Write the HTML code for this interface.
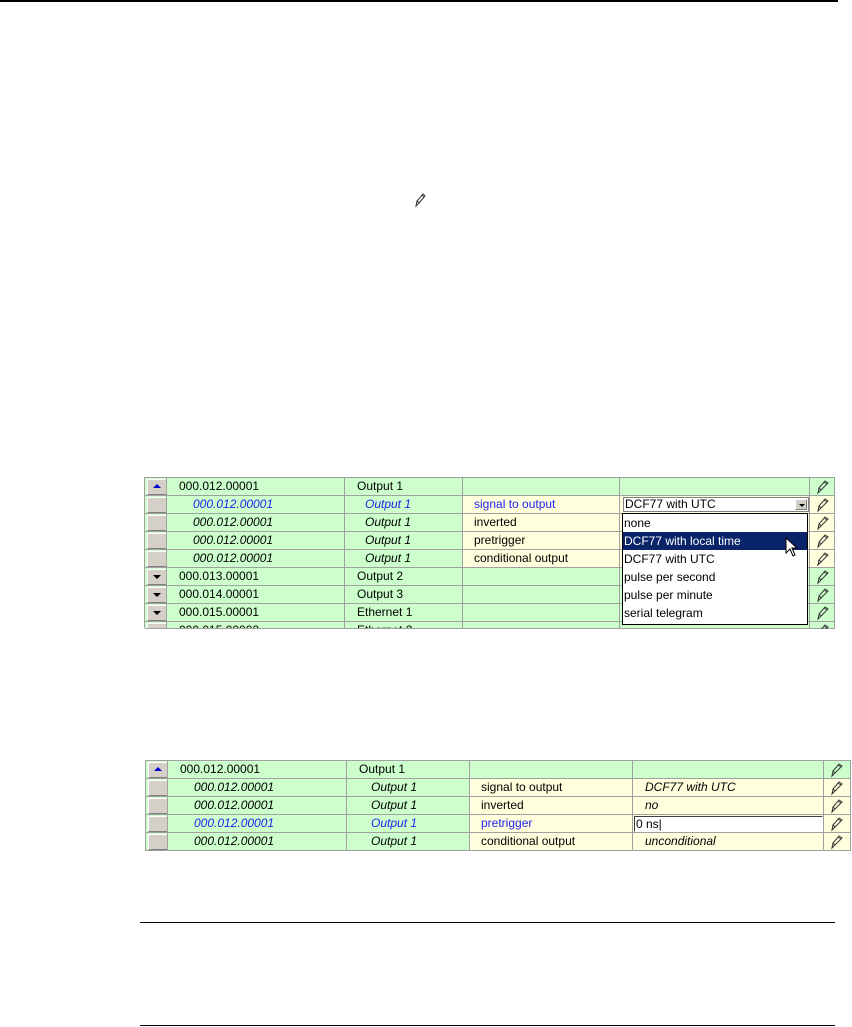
<!DOCTYPE html>
<html><head><meta charset="utf-8"><style>
body{margin:0;width:852px;height:1027px;background:#fff;position:relative;overflow:hidden;font-family:"Liberation Sans",sans-serif;font-size:12px;}
.a{position:absolute;box-sizing:border-box;}
.c{position:absolute;box-sizing:border-box;border-right:1px solid #a0a0a0;border-bottom:1px solid #a0a0a0;height:18px;line-height:17px;white-space:nowrap;overflow:hidden;color:#000;}
.g{background:#ccffcc;}.y{background:#ffffdd;}
.btn{background:#d4d0c8;border:1px solid;border-color:#fff #808080 #808080 #fff;}
.ic{position:absolute;}
</style></head><body>
<div class="a" style="left:0;top:0;width:838px;height:2px;background:#000"></div>
<svg class="ic" style="left:413px;top:192px" width="14" height="16" viewBox="0 0 14 16"><path d="M3 14 L4 9 L10 2 L12 4 L6 11 Z M4 9 L6 11 M9 3 L11 5" fill="none" stroke="#333" stroke-width="1"/></svg>
<div id="t1"></div><div id="t2"></div>
<div class="a" style="left:140px;top:629px;width:712px;height:25px;background:#fff"></div>
<div class="a" style="left:140px;top:922px;width:695px;height:1px;background:#000"></div>
<div class="a" style="left:140px;top:1025px;width:695px;height:1px;background:#000"></div>
<script>
function pencil(x,y){return '<svg class="ic" style="left:'+x+'px;top:'+y+'px" width="14" height="16" viewBox="0 0 14 16"><path d="M2 14 L3 9 L9 2 L12 4 L5 11 Z M3 9 L5 11 M8 3 L11 5" fill="none" stroke="#333" stroke-width="1"/></svg>';}
function build(id,x0,y0,cols,rows,clipH){
 var h='';var xs=[x0];for(var k=0;k<cols.length;k++)xs.push(xs[k]+cols[k]);
 h+='<div class="a" style="left:'+(x0-1)+'px;top:'+(y0-1)+'px;width:'+(xs[xs.length-1]-x0+1)+'px;height:1px;background:#a0a0a0"></div>';
 h+='<div class="a" style="left:'+(x0-1)+'px;top:'+(y0-1)+'px;width:1px;height:'+(clipH||rows.length*18+1)+'px;background:#a0a0a0"></div>';
 rows.forEach(function(r,ri){var y=y0+ri*18;
  var hh=18; if(clipH && y-y0+18>clipH) hh=clipH-(y-y0);
  h+='<div class="c" style="left:'+xs[0]+'px;top:'+y+'px;width:'+cols[0]+'px;height:'+hh+'px;background:#ccffcc;padding:1px 2px"><div class="btn" style="width:18px;height:14px;position:relative">'+(r.ar=='u'?'<div style="position:absolute;left:5px;top:4px;width:0;height:0;border-left:4px solid transparent;border-right:4px solid transparent;border-bottom:4px solid #00c"></div>':r.ar=='d'?'<div style="position:absolute;left:5px;top:5px;width:0;height:0;border-left:4px solid transparent;border-right:4px solid transparent;border-top:4px solid #000"></div>':'')+'</div></div>';
  for(var k=1;k<cols.length;k++){
   var cl=(k<=2?'g':(r.sub?'y':'g'));if(k==cols.length-1)cl=r.sub?'y':'g';
   var t=r.t[k-1]||'';var st=r.s[k-1]||'';
   h+='<div class="c '+cl+'" style="left:'+xs[k]+'px;top:'+y+'px;width:'+cols[k]+'px;height:'+hh+'px;'+st+'">'+t+'</div>';
  }
  h+=pencil(xs[cols.length-1]+6,y+1);
 });
 document.getElementById(id).innerHTML=h;
}
var L='padding-left:12px;',I='padding-left:26px;',B='color:#2222ee;';
var r1=[
{ar:'u',t:['000.012.00001','Output 1','',''],s:[L,L,'','']},
{sub:1,t:['000.012.00001','Output 1','signal to output',''],s:[I+'font-style:italic;'+B,'padding-left:20px;font-style:italic;'+B,'padding-left:11px;'+B,'']},
{sub:1,t:['000.012.00001','Output 1','inverted',''],s:[I+'font-style:italic;','padding-left:20px;font-style:italic;','padding-left:11px;','']},
{sub:1,t:['000.012.00001','Output 1','pretrigger',''],s:[I+'font-style:italic;','padding-left:20px;font-style:italic;','padding-left:11px;','']},
{sub:1,t:['000.012.00001','Output 1','conditional output',''],s:[I+'font-style:italic;','padding-left:20px;font-style:italic;','padding-left:11px;','']},
{ar:'d',t:['000.013.00001','Output 2','',''],s:[L,L,'','']},
{ar:'d',t:['000.014.00001','Output 3','',''],s:[L,L,'','']},
{ar:'d',t:['000.015.00001','Ethernet 1','',''],s:[L,L,'','']},
{ar:'d',t:['000.015.00002','Ethernet 2','',''],s:[L,L,'','']}];
build('t1',145,478,[22,178,118,157,190,25],r1,151);
var r2=[
{ar:'u',t:['000.012.00001','Output 1','',''],s:[L,L,'','']},
{sub:1,t:['000.012.00001','Output 1','signal to output','DCF77 with UTC'],s:[I+'font-style:italic;','padding-left:24px;font-style:italic;','padding-left:11px;','padding-left:12px;font-style:italic;']},
{sub:1,t:['000.012.00001','Output 1','inverted','no'],s:[I+'font-style:italic;','padding-left:24px;font-style:italic;','padding-left:11px;','padding-left:12px;font-style:italic;']},
{sub:1,t:['000.012.00001','Output 1','pretrigger',''],s:[I+'font-style:italic;'+B,'padding-left:24px;font-style:italic;'+B,'padding-left:11px;'+B,'']},
{sub:1,t:['000.012.00001','Output 1','conditional output','unconditional'],s:[I+'font-style:italic;','padding-left:24px;font-style:italic;','padding-left:11px;','padding-left:12px;font-style:italic;']}];
build('t2',146,761,[22,179,123,163,191,27],r2);
</script>
<div class="a" style="left:623px;top:497px;width:186px;height:15px;background:#fff;border:1px solid #808080;line-height:13px;padding-left:1px">DCF77 with UTC
<div class="a" style="right:1px;top:1px;width:12px;height:11px;background:#d4d0c8;border:1px solid;border-color:#fff #808080 #808080 #fff"><div style="position:absolute;left:3px;top:4px;border-left:3px solid transparent;border-right:3px solid transparent;border-top:3px solid #000"></div></div></div>
<div class="a" style="left:622px;top:513px;width:186px;height:112px;background:#fff;border:1px solid #000;line-height:18px;padding-top:0">
<div style="padding-left:1px;height:18px">none</div>
<div style="padding-left:1px;height:18px;background:#0a246a;color:#fff">DCF77 with local time</div>
<div style="padding-left:1px;height:18px">DCF77 with UTC</div>
<div style="padding-left:1px;height:18px">pulse per second</div>
<div style="padding-left:1px;height:18px">pulse per minute</div>
<div style="padding-left:1px;height:18px">serial telegram</div>
</div>
<svg class="ic" style="left:785px;top:537px" width="16" height="22" viewBox="0 0 16 22"><path d="M1 1 L1 16 L5 12 L8 19 L10 18 L7 11 L12 11 Z" fill="#fff" stroke="#000" stroke-width="1"/></svg>
<div class="a" style="left:634px;top:816px;width:189px;height:16px;background:#fff;border:1px solid;border-color:#404040 #fff #fff #404040;line-height:14px;padding-left:1px">0 ns|</div>
</body></html>
